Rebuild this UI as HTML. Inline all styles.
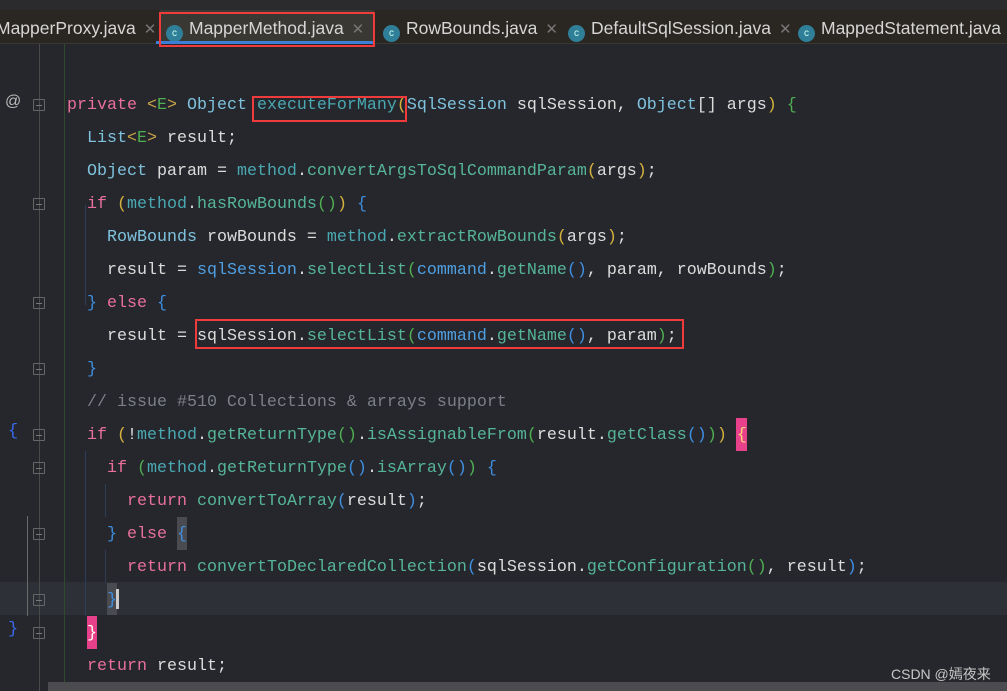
<!DOCTYPE html>
<html><head><meta charset="utf-8"><style>
*{margin:0;padding:0;box-sizing:border-box}
body{width:1007px;height:691px;overflow:hidden;background:#26272c;font-family:"Liberation Sans","Noto Sans CJK SC",sans-serif;position:relative}
.crumb{position:absolute;left:0;top:0;width:1007px;height:10px;background:#2b2b2e;overflow:hidden}
.tabs{position:absolute;left:0;top:10px;width:1007px;height:34px;background:#2a2621;border-bottom:1px solid #3a3833}
.tab{position:absolute;top:0;height:34px;line-height:37px;color:#d6d6d6;font-size:17.5px;white-space:nowrap}
.ic{display:inline-block;width:17px;height:17px;border-radius:50%;background:#2f7f98;color:#cfe;font-size:10px;line-height:17px;text-align:center;vertical-align:-2px;margin-right:6px;font-family:"Liberation Sans",sans-serif}
.x{color:#777;margin-left:8px;font-size:15px}
.code{position:absolute;left:0;top:44px;width:1007px;height:647px;font-family:"Liberation Mono",monospace;font-size:16.67px;color:#dcdcdc;overflow:hidden}
.r{position:absolute;left:0;height:33px;line-height:35px;white-space:pre}
.k{color:#e8709a}.t{color:#7ec2de}.f{color:#4aa8b2}.m{color:#55b596}.v{color:#4e9fe2}.c{color:#7c7f87}.y{color:#d5b23d}.g{color:#4fae52}.b{color:#3f8fe0}.gen{color:#c9a24a}.e{color:#4fae52}
.box{position:absolute;border:2px solid #ef3b3b}
.gut{position:absolute;color:#3a6af0;font-size:17px;font-family:"Liberation Mono",monospace}
.fold{position:absolute;left:33px;width:12px;height:12px;border:1px solid #666;border-radius:1px}
.fold:after{content:"";position:absolute;left:2px;top:5px;width:6px;height:1px;background:#777}
</style></head><body>
<div class="crumb"></div>
<div class="tabs">
 <div class="tab" style="left:-4px">MapperProxy.java<span class="x">✕</span></div>
 <div class="tab" style="left:160px;width:214px;background:#3a3833;padding-left:6px"><span class="ic">c</span>MapperMethod.java<span class="x">✕</span></div>
 <div class="tab" style="left:383px"><span class="ic">c</span>RowBounds.java<span class="x">✕</span></div>
 <div class="tab" style="left:568px"><span class="ic">c</span>DefaultSqlSession.java<span class="x">✕</span></div>
 <div class="tab" style="left:798px"><span class="ic">c</span>MappedStatement.java</div>
</div>
<div style="position:absolute;left:156px;top:41px;width:218px;height:3px;background:#3d7fd6"></div>
<div class="box" style="left:159px;top:12px;width:216px;height:35px"></div>
<div class="code">
 <div style="position:absolute;left:0;top:538px;width:1007px;height:33px;background:#2e3038"></div>
 <div style="position:absolute;left:39px;top:0;width:1px;height:647px;background:#4a4a4a"></div>
 <div style="position:absolute;left:64px;top:0;width:1px;height:647px;background:#2f4a2f"></div>
 <div style="position:absolute;left:27px;top:472px;width:1px;height:100px;background:#6a6a6a"></div>
 <div style="position:absolute;left:85px;top:161px;width:1px;height:100px;background:#2d3d5a"></div>
 <div style="position:absolute;left:85px;top:407px;width:1px;height:165px;background:#2d3d5a"></div>
 <div style="position:absolute;left:105px;top:440px;width:1px;height:33px;background:#2d3d5a"></div>
 <div style="position:absolute;left:105px;top:506px;width:1px;height:33px;background:#2d3d5a"></div>
 <div style="position:absolute;left:5px;top:49px;color:#bbb;font-size:16px;font-family:'Liberation Sans',sans-serif">@</div>
 <div class="gut" style="left:8px;top:378px">{</div>
 <div class="gut" style="left:8px;top:576px">}</div>
 <div class="fold" style="top:55px"></div>
 <div class="fold" style="top:154px"></div>
 <div class="fold" style="top:253px"></div>
 <div class="fold" style="top:319px"></div>
 <div class="fold" style="top:385px"></div>
 <div class="fold" style="top:418px"></div>
 <div class="fold" style="top:484px"></div>
 <div class="fold" style="top:550px"></div>
 <div class="fold" style="top:583px"></div>
 <div class="r" style="top:44px;left:67px"><span class="k">private</span> <span class="gen">&lt;</span><span class="e">E</span><span class="gen">&gt;</span> <span class="t">Object</span> <span class="f">executeForMany</span><span class="y">(</span><span class="t">SqlSession</span> sqlSession, <span class="t">Object</span>[] args<span class="y">)</span> <span class="g">{</span></div>
 <div class="r" style="top:77px;left:87px"><span class="t">List</span><span class="gen">&lt;</span><span class="e">E</span><span class="gen">&gt;</span> result;</div>
 <div class="r" style="top:110px;left:87px"><span class="t">Object</span> param = <span class="f">method</span>.<span class="m">convertArgsToSqlCommandParam</span><span class="y">(</span>args<span class="y">)</span>;</div>
 <div class="r" style="top:143px;left:87px"><span class="k">if</span> <span class="y">(</span><span class="f">method</span>.<span class="m">hasRowBounds</span><span class="g">()</span><span class="y">)</span> <span class="b">{</span></div>
 <div class="r" style="top:176px;left:107px"><span class="t">RowBounds</span> rowBounds = <span class="f">method</span>.<span class="m">extractRowBounds</span><span class="y">(</span>args<span class="y">)</span>;</div>
 <div class="r" style="top:209px;left:107px">result = <span class="v">sqlSession</span>.<span class="m">selectList</span><span class="g">(</span><span class="v">command</span>.<span class="m">getName</span><span class="b">()</span>, param, rowBounds<span class="g">)</span>;</div>
 <div class="r" style="top:242px;left:87px"><span class="b">}</span> <span class="k">else</span> <span class="b">{</span></div>
 <div class="r" style="top:275px;left:107px">result = sqlSession.<span class="m">selectList</span><span class="g">(</span><span class="v">command</span>.<span class="m">getName</span><span class="b">()</span>, param<span class="g">)</span>;</div>
 <div class="r" style="top:308px;left:87px"><span class="b">}</span></div>
 <div class="r c" style="top:341px;left:87px">// issue #510 Collections &amp; arrays support</div>
 <div style="position:absolute;left:736px;top:374px;width:11px;height:33px;background:#e8418c"></div>
 <div class="r" style="top:374px;left:87px"><span class="k">if</span> <span class="y">(</span>!<span class="f">method</span>.<span class="m">getReturnType</span><span class="g">()</span>.<span class="m">isAssignableFrom</span><span class="g">(</span>result.<span class="m">getClass</span><span class="b">()</span><span class="g">)</span><span class="y">)</span> <span style="color:#ffd27a">{</span></div>
 <div class="r" style="top:407px;left:107px"><span class="k">if</span> <span class="g">(</span><span class="f">method</span>.<span class="m">getReturnType</span><span class="b">()</span>.<span class="m">isArray</span><span class="b">()</span><span class="g">)</span> <span class="b">{</span></div>
 <div class="r" style="top:440px;left:127px"><span class="k">return</span> <span class="m">convertToArray</span><span class="b">(</span>result<span class="b">)</span>;</div>
 <div style="position:absolute;left:177px;top:473px;width:10px;height:33px;background:#4a4b50"></div>
 <div class="r" style="top:473px;left:107px"><span class="b">}</span> <span class="k">else</span> <span class="b">{</span></div>
 <div class="r" style="top:506px;left:127px"><span class="k">return</span> <span class="m">convertToDeclaredCollection</span><span class="b">(</span>sqlSession.<span class="m">getConfiguration</span><span class="g">()</span>, result<span class="b">)</span>;</div>
 <div style="position:absolute;left:107px;top:539px;width:10px;height:32px;background:#4a4b50"></div>
 <div style="position:absolute;left:116px;top:545px;width:3px;height:20px;background:#ccc"></div>
 <div class="r" style="top:539px;left:107px"><span class="b">}</span></div>
 <div style="position:absolute;left:87px;top:572px;width:10px;height:33px;background:#e8418c"></div>
 <div class="r" style="top:572px;left:87px"><span style="color:#ffe">}</span></div>
 <div class="r" style="top:605px;left:87px"><span class="k">return</span> result;</div>
 <div class="box" style="left:252px;top:52px;width:155px;height:26px"></div>
 <div class="box" style="left:195px;top:275px;width:489px;height:30px"></div>
 <div style="position:absolute;left:48px;top:638px;width:959px;height:9px;background:#4b4b50"></div>
 <div style="position:absolute;left:891px;top:620px;font-family:'Liberation Sans','Noto Sans CJK SC',sans-serif;font-size:14px;color:#c8c8c8">CSDN @嫣夜来</div>
</div>
</body></html>
